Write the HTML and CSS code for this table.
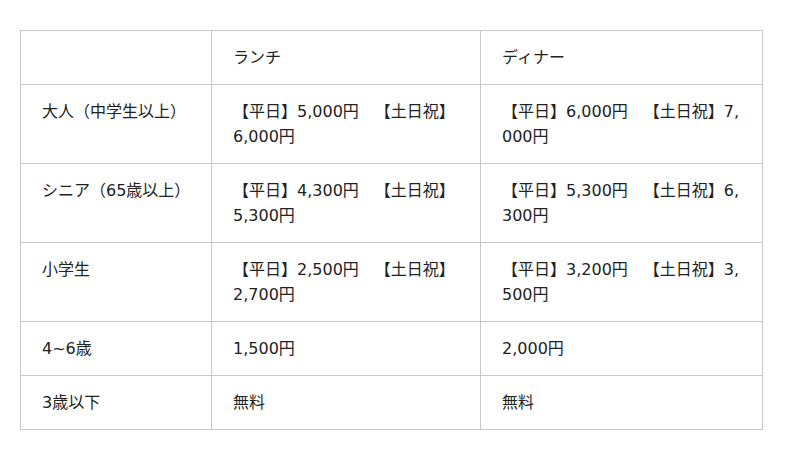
FILE: index.html
```html
<!DOCTYPE html>
<html lang="ja">
<head>
<meta charset="utf-8">
<link rel="stylesheet" href="styles.css">
</head>
<body>
<table class="price">
  <colgroup><col class="c1"><col class="c2"><col class="c3"></colgroup>
  <tr><td></td><td>ランチ</td><td>ディナー</td></tr>
  <tr><td>大人（中学生以上）</td><td>【平日】5,000円　【土日祝】6,000円</td><td>【平日】6,000円　【土日祝】7,000円</td></tr>
  <tr><td>シニア（65歳以上）</td><td>【平日】4,300円　【土日祝】5,300円</td><td>【平日】5,300円　【土日祝】6,300円</td></tr>
  <tr><td>小学生</td><td>【平日】2,500円　【土日祝】2,700円</td><td>【平日】3,200円　【土日祝】3,500円</td></tr>
  <tr><td>4~6歳</td><td>1,500円</td><td>2,000円</td></tr>
  <tr><td>3歳以下</td><td>無料</td><td>無料</td></tr>
</table>
</body>
</html>
```
FILE: styles.css
```css
html, body { margin: 0; background: #fff; }
body { padding: 30px 20px; }
.price {
  border-collapse: collapse;
  table-layout: fixed;
  width: 742px;
  font-family: "DejaVu Sans", "Noto Sans CJK JP", sans-serif;
  font-size: 16px;
  line-height: 25px;
  color: #222;
  text-spacing-trim: space-all;
}
.c1 { width: 191px; }
.c2 { width: 269px; }
.c3 { width: 282px; }
.price td {
  border: 1px solid #c8c8c8;
  padding: 14px 20px 14px 21px;
  vertical-align: top;
  word-break: break-all;
}
```
